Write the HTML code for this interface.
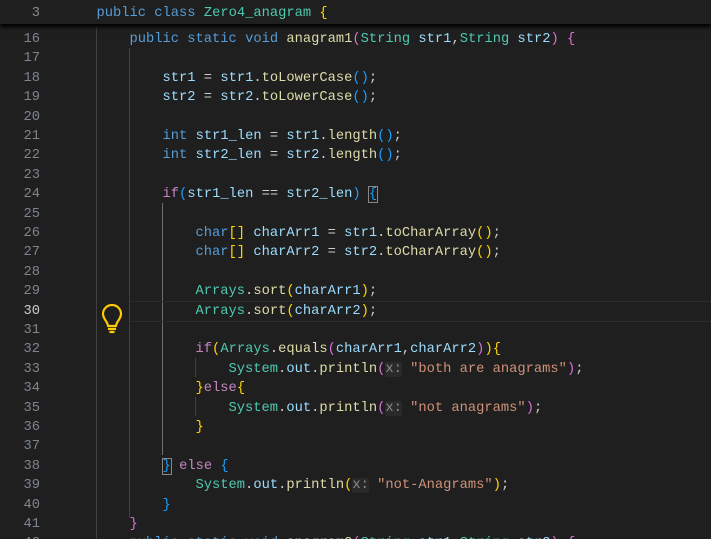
<!DOCTYPE html>
<html style="margin:0;width:711px;height:539px;overflow:hidden"><head><meta charset="utf-8"><style>
body{margin:0;width:711px;height:539px;background:#1f1f1f;overflow:hidden;position:relative;font-family:"Liberation Mono",monospace;font-size:13.75px}
.l{position:absolute;left:0;height:19.4px;line-height:19.4px;width:711px}
.n{position:absolute;left:0;width:40px;text-align:right;color:#7d8590}
.c{position:absolute;left:63.5px;white-space:pre;color:#cccccc}
.k{color:#569cd6}.t{color:#4ec9b0}.f{color:#dcdcaa}.v{color:#9cdcfe}.p{color:#c586c0}.s{color:#ce9178}
.g{color:#ffd700}.m{color:#da70d6}.b{color:#179fff}
.h{background:#2a2a2a;color:#8c8c8c;border-radius:2px}
.gd{position:absolute;width:1px;background:#404040}
</style></head><body>
<div class="gd" style="left:96px;top:28px;height:511px"></div>
<div class="gd" style="left:129px;top:48px;height:470px"></div>
<div class="gd" style="left:162px;top:203px;height:252px;background:#707070"></div>
<div class="gd" style="left:195px;top:358px;height:19px"></div>
<div class="gd" style="left:195px;top:397px;height:19px"></div>
<div style="position:absolute;left:130px;top:301px;width:581px;height:19px;border-top:1px solid #2c2c2c;border-bottom:1px solid #2c2c2c"></div>
<div style="position:absolute;left:0;top:1.5px;width:711px;height:539px">
<div class="l" style="top:28.5px"><span class="n">16</span><span class="c">        <span class="k">public</span> <span class="k">static</span> <span class="k">void</span> <span class="f">anagram1</span><span class="m">(</span><span class="t">String</span> <span class="v">str1</span>,<span class="t">String</span> <span class="v">str2</span><span class="m">)</span> <span class="m">{</span></span></div>
<div class="l" style="top:47.9px"><span class="n">17</span></div>
<div class="l" style="top:67.3px"><span class="n">18</span><span class="c">            <span class="v">str1</span> = <span class="v">str1</span>.<span class="f">toLowerCase</span><span class="b">()</span>;</span></div>
<div class="l" style="top:86.7px"><span class="n">19</span><span class="c">            <span class="v">str2</span> = <span class="v">str2</span>.<span class="f">toLowerCase</span><span class="b">()</span>;</span></div>
<div class="l" style="top:106.1px"><span class="n">20</span></div>
<div class="l" style="top:125.5px"><span class="n">21</span><span class="c">            <span class="k">int</span> <span class="v">str1_len</span> = <span class="v">str1</span>.<span class="f">length</span><span class="b">()</span>;</span></div>
<div class="l" style="top:144.9px"><span class="n">22</span><span class="c">            <span class="k">int</span> <span class="v">str2_len</span> = <span class="v">str2</span>.<span class="f">length</span><span class="b">()</span>;</span></div>
<div class="l" style="top:164.3px"><span class="n">23</span></div>
<div class="l" style="top:183.7px"><span class="n">24</span><span class="c">            <span class="p">if</span><span class="b">(</span><span class="v">str1_len</span> == <span class="v">str2_len</span><span class="b">)</span> <span class="b" style="outline:1px solid #888">{</span></span></div>
<div class="l" style="top:203.1px"><span class="n">25</span></div>
<div class="l" style="top:222.5px"><span class="n">26</span><span class="c">                <span class="k">char</span><span class="g">[]</span> <span class="v">charArr1</span> = <span class="v">str1</span>.<span class="f">toCharArray</span><span class="g">()</span>;</span></div>
<div class="l" style="top:241.9px"><span class="n">27</span><span class="c">                <span class="k">char</span><span class="g">[]</span> <span class="v">charArr2</span> = <span class="v">str2</span>.<span class="f">toCharArray</span><span class="g">()</span>;</span></div>
<div class="l" style="top:261.3px"><span class="n">28</span></div>
<div class="l" style="top:280.7px"><span class="n">29</span><span class="c">                <span class="t">Arrays</span>.<span class="f">sort</span><span class="g">(</span><span class="v">charArr1</span><span class="g">)</span>;</span></div>
<div class="l" style="top:300.1px"><span class="n" style="color:#ccc">30</span><span class="c">                <span class="t">Arrays</span>.<span class="f">sort</span><span class="g">(</span><span class="v">charArr2</span><span class="g">)</span>;</span></div>
<div class="l" style="top:319.5px"><span class="n">31</span></div>
<div class="l" style="top:338.9px"><span class="n">32</span><span class="c">                <span class="p">if</span><span class="g">(</span><span class="t">Arrays</span>.<span class="f">equals</span><span class="m">(</span><span class="v">charArr1</span>,<span class="v">charArr2</span><span class="m">)</span><span class="g">)</span><span class="g">{</span></span></div>
<div class="l" style="top:358.3px"><span class="n">33</span><span class="c">                    <span class="t">System</span>.<span class="v">out</span>.<span class="f">println</span><span class="m">(</span><span class="h">x:</span> <span class="s">"both are anagrams"</span><span class="m">)</span>;</span></div>
<div class="l" style="top:377.7px"><span class="n">34</span><span class="c">                <span class="g">}</span><span class="p">else</span><span class="g">{</span></span></div>
<div class="l" style="top:397.1px"><span class="n">35</span><span class="c">                    <span class="t">System</span>.<span class="v">out</span>.<span class="f">println</span><span class="m">(</span><span class="h">x:</span> <span class="s">"not anagrams"</span><span class="m">)</span>;</span></div>
<div class="l" style="top:416.5px"><span class="n">36</span><span class="c">                <span class="g">}</span></span></div>
<div class="l" style="top:435.9px"><span class="n">37</span></div>
<div class="l" style="top:455.3px"><span class="n">38</span><span class="c">            <span class="b" style="outline:1px solid #888">}</span> <span class="p">else</span> <span class="b">{</span></span></div>
<div class="l" style="top:474.7px"><span class="n">39</span><span class="c">                <span class="t">System</span>.<span class="v">out</span>.<span class="f">println</span><span class="g">(</span><span class="h">x:</span> <span class="s">"not-Anagrams"</span><span class="g">)</span>;</span></div>
<div class="l" style="top:494.1px"><span class="n">40</span><span class="c">            <span class="b">}</span></span></div>
<div class="l" style="top:513.5px"><span class="n">41</span><span class="c">        <span class="m">}</span></span></div>
<div class="l" style="top:532.9px"><span class="n">42</span><span class="c">        <span class="k">public</span> <span class="k">static</span> <span class="k">void</span> <span class="f">anagram2</span><span class="m">(</span><span class="t">String</span> <span class="v">str1</span>,<span class="t">String</span> <span class="v">str2</span><span class="m">)</span> <span class="m">{</span></span></div>
</div>
<svg style="position:absolute;left:100px;top:304px" width="24" height="30" viewBox="0 0 24 30"><path d="M8 22 C8 18 3 15 3 10 A9 9 0 0 1 21 10 C21 15 16 18 16 22 Z M8 25 H16 M9.5 28 H14.5" fill="none" stroke="#ffcc00" stroke-width="2.2" stroke-linejoin="round"/></svg>

<div style="position:absolute;left:0;top:0;width:711px;height:24px;background:#1f1f1f;box-shadow:0 3px 4px #000;">
<div class="l" style="top:4px"><span class="n" style="color:#8a8a8a">3</span><span class="c">    <span class="k">public</span> <span class="k">class</span> <span class="t">Zero4_anagram</span> <span class="g">{</span></span></div>
</div>
</body></html>
